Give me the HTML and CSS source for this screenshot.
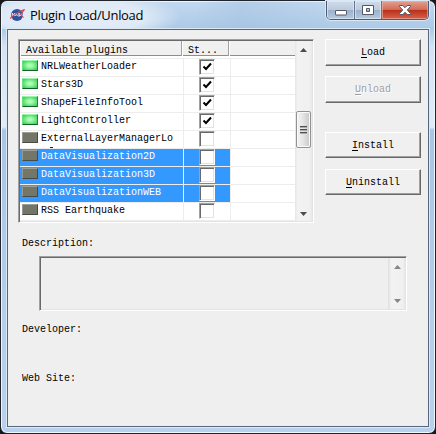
FILE: index.html
```
<!DOCTYPE html>
<html lang="en">
<head>
<meta charset="utf-8">
<title>Plugin Load/Unload</title>
<link rel="stylesheet" href="styles.css">
</head>
<body>
<div class="window">
  <header class="titlebar">
    <svg class="logo" width="16" height="14" viewBox="0 0 16 14">
      <circle cx="7" cy="7" r="6" fill="#2d559f"/>
      <path d="M2.300 8V5.200L4.500 8V5.200M5 8l1.200-2.600L7.400 8M8.200 8h1.500L8.500 5.700h1.700M10.500 8l1-2.500L12.400 8" fill="none" stroke="#e2eaf6" stroke-width="1"/>
      <path d="M0 10.500Q7 4 14.500 1.500Q12.500 3.500 10.800 6.500L13.500 9.500" fill="none" stroke="#d84352" stroke-width="1.100"/>
    </svg>
    <h1 class="title">Plugin Load/Unload</h1>
    <div class="controls">
      <span class="control min"><svg width="12" height="6" viewBox="0 0 12 6"><rect x=".5" y=".5" width="11" height="4.500" rx=".5" fill="#fff" stroke="#535766"/></svg></span>
      <span class="control max"><svg width="12" height="10" viewBox="0 0 12 10"><path d="M.5.5h11v9H.5zM4.500 3.500v3h3v-3z" fill="#fff" fill-rule="evenodd" stroke="#535766"/></svg></span>
      <span class="control close"><svg width="12" height="10" viewBox="0 0 12 10"><path d="M.5.5h3.300L6 2.700 8.200.5h3.300v1L8.300 5l3.200 3.500v1H8.200L6 7.300 3.800 9.500H.5v-1L3.700 5 .5 1.500z" fill="#fff" stroke="#535666"/></svg></span>
    </div>
  </header>
  <main class="client">
    <section class="top">
      <div class="list">
        <div class="table">
          <div class="head"><span>Available plugins</span><span>St...</span><span></span></div>
          <div class="row"><span class="name"><i class="led on"></i>NRLWeatherLoader</span><span class="state"><i class="check"><svg width="12" height="12"><path d="M2.500 5.500l2.500 2.500 5-5.500" /></svg></i></span><span></span></div>
          <div class="row"><span class="name"><i class="led on"></i>Stars3D</span><span class="state"><i class="check"><svg width="12" height="12"><path d="M2.500 5.500l2.500 2.500 5-5.500" /></svg></i></span><span></span></div>
          <div class="row"><span class="name"><i class="led on"></i>ShapeFileInfoTool</span><span class="state"><i class="check"><svg width="12" height="12"><path d="M2.500 5.500l2.500 2.500 5-5.500" /></svg></i></span><span></span></div>
          <div class="row"><span class="name"><i class="led on"></i>LightController</span><span class="state"><i class="check"><svg width="12" height="12"><path d="M2.500 5.500l2.500 2.500 5-5.500" /></svg></i></span><span></span></div>
          <div class="row wrapped"><span class="name"><i class="led"></i>ExternalLayerManagerLo</span><span class="state"><i class="check"></i></span><span></span></div>
          <div class="row selected"><span class="name"><i class="led"></i>DataVisualization2D</span><span class="state"><i class="check"></i></span><span></span></div>
          <div class="row selected"><span class="name"><i class="led"></i>DataVisualization3D</span><span class="state"><i class="check"></i></span><span></span></div>
          <div class="row selected"><span class="name"><i class="led"></i>DataVisualizationWEB</span><span class="state"><i class="check"></i></span><span></span></div>
          <div class="row"><span class="name"><i class="led"></i>RSS Earthquake</span><span class="state"><i class="check"></i></span><span></span></div>
          <div class="row"><span class="name"></span><span class="state"><i class="check"></i></span><span></span></div>
        </div>
        <div class="scroll">
          <svg width="7" height="4" viewBox="0 0 7 4"><path d="M3.500 0L7 4H0z"/></svg>
          <div class="thumb"><i></i><i></i><i></i></div>
          <svg width="7" height="4" viewBox="0 0 7 4"><path d="M0 0h7L3.500 4z"/></svg>
        </div>
      </div>
      <div class="buttons">
        <button><span><u>L</u>oad</span></button>
        <button disabled><span><u>U</u>nload</span></button>
        <button class="install"><span><u>I</u>nstall</span></button>
        <button class="uninstall"><span><u>U</u>ninstall</span></button>
      </div>
    </section>
    <section class="details">
      <p>Description:</p>
      <div class="textbox">
        <div class="scroll faint">
          <svg width="7" height="4" viewBox="0 0 7 4"><path d="M3.500 0L7 4H0z"/></svg>
          <svg width="7" height="4" viewBox="0 0 7 4"><path d="M0 0h7L3.500 4z"/></svg>
        </div>
      </div>
      <p class="developer">Developer:</p>
      <p class="website">Web Site:</p>
    </section>
  </main>
</div>
</body>
</html>
```
FILE: styles.css
```
* { box-sizing: border-box; }
body {
  margin: 0;
  background: #17171c;
  font: 10px/12px "Liberation Mono", monospace;
  color: #000;
  overflow: hidden;
}
.window {
  width: 436px;
  height: 434px;
  padding: 0 6px 6px;
  border: 1px solid #20242c;
  border-radius: 7px;
  box-shadow: inset 0 0 0 1px #eef6fe;
  background: linear-gradient(180deg, #c3d9ef 0, #abc9e6 28px, #d3e3f4 45px, #e0ebf7 126px, #a9c5e3 129px, #b4cde9 300px, #b9d1ec 100%);
}
.titlebar {
  display: flex;
  height: 28px;
  margin: 0 -5px;
  padding: 0 5px 0 8px;
  background: radial-gradient(ellipse 110px 27px at 70px 16px, #e5eef8 0, #dfeaf6 65%, transparent 100%), linear-gradient(100deg, transparent 45%, #9fbfdf66 55%, transparent 75%);
  border-radius: 6px 6px 0 0;
}
.logo { margin: 7px 4px 0 0; flex: none; }
.title {
  margin: 4px 0 0;
  font: 13px/20px "Open Sans", sans-serif;
  white-space: nowrap;
  letter-spacing: -0.33px;
}
.controls {
  display: flex;
  width: 103px;
  height: 19px;
  margin: 0 0 0 auto;
  border: 1px solid #4c5a70;
  border-top: 0;
  border-radius: 0 0 5px 5px;
  box-shadow: 0 0 0 1px #d9e8f7;
  overflow: hidden;
}
.control {
  display: flex;
  align-items: center;
  justify-content: center;
  width: 28px;
  box-shadow: inset 0 0 0 1px #e4edf6aa;
  background: linear-gradient(#d0dbe8 0, #bccbdd 48%, #9bb0ca 50%, #b5c9e0 100%);
}
.min { padding-top: 5px; border-right: 1px solid #65758b; }
.max { width: 27px; border-right: 1px solid #65758b; }
.close {
  flex: 1;
  box-shadow: inset 0 0 0 1px #eab9ad99;
  background: linear-gradient(#e3a091 0, #d36e59 47%, #b82f19 50%, #d8624a 100%);
}
.client {
  height: 398px;
  padding: 9px 6px 0 10px;
  border: 1px solid #56677b;
  box-shadow: 0 0 0 1px #dbe8f6;
  background: #efefef;
}
.top { display: flex; gap: 11px; }
.list, .textbox {
  border: 1px solid;
  border-color: #a0a0a0 #fff #fff #a0a0a0;
  box-shadow: inset 1px 1px #696969, inset -1px -1px #e3e3e3;
}
.list {
  display: flex;
  width: 296px;
  height: 184px;
  padding: 1px;
}
.table {
  width: 275px;
  height: 180px;
  overflow: hidden;
  background: #fff;
}
.head, .row {
  display: grid;
  grid-template-columns: 164px 47px 1fr;
  height: 18px;
  white-space: pre;
}
.head {
  grid-template-columns: 162px 47px 1fr;
  height: 15px;
  background: #f0f0f0;
  border-bottom: 1px solid #8d8d8d;
}
.head span { padding: 4px 0 0 5px; line-height: 11px; border-right: 1px solid #a0a0a0; border-left: 1px solid #fff; }
.head span:last-child { border-right: 0; }
.head + .row { height: 21px; padding-top: 2px; }
.head + .row > span { height: 19px; border-top: 1px solid #ededed; }
.row > span { border-right: 1px solid #ededed; border-bottom: 1px solid #ededed; }
.row > span:last-child { border-right: 0; }
.name { display: flex; padding-left: 2px; line-height: 15px; }
.led {
  width: 16px;
  height: 11px;
  margin: 1px 3px 0 0;
  border: 1px solid;
  border-color: #9b9e94 #484b43 #484b43 #96998f;
  background: #747768;
}
.on {
  border-color: #9af7aa #23823a #126125 #66e47e;
  background: radial-gradient(ellipse, #a8ffb1 20%, #64e17b 65%, #41be5c);
}
.state { padding-left: 15px; }
.check {
  display: block;
  width: 16px;
  height: 16px;
  padding: 1px;
  border: 1px solid;
  border-color: #a0a0a0 #fff #fff #a0a0a0;
  background: #fff;
  box-shadow: inset 1px 1px #696969, inset -1px -1px #e3e3e3;
}
.check svg { display: block; fill: none; stroke: #000; stroke-width: 2; }
.selected > span:not(:last-child) { background: #3399ff; color: #fff; }
.wrapped .name { position: relative; }
.wrapped .name::after {
  content: "";
  position: absolute;
  left: 30px;
  bottom: 0;
  width: 3px;
  height: 1px;
  background: #222;
}
.scroll {
  display: flex;
  flex-direction: column;
  align-items: center;
  width: 17px;
  padding: 7px 0 5px;
  background: linear-gradient(90deg, #e5e5e5, #f2f2f2 15%, #f0f0f0 85%, #e8e8e8);
}
.scroll svg { display: block; fill: #4b4b4b; }
.thumb {
  display: flex;
  flex-direction: column;
  align-items: center;
  justify-content: center;
  gap: 1px;
  width: 15px;
  height: 37px;
  margin: 59px 0 auto;
  border: 1px solid #929292;
  border-radius: 2px;
  box-shadow: inset 0 0 0 1px #fafafa;
  background: linear-gradient(90deg, #f4f4f4 0, #e5e5e5 45%, #c8c8c8 100%);
}
.thumb i { width: 7px; height: 2px; border-top: 1px solid #4f4f4f; background: #aaa; }
.buttons { width: 96px; }
button {
  display: block;
  width: 96px;
  height: 27px;
  margin: 0 0 10px;
  padding: 1px 0 0;
  border: 1px solid;
  border-color: #fff #696969 #696969 #fff;
  box-shadow: inset -1px -1px #a0a0a0;
  background: #f0f0f0;
  font: inherit;
  color: #000;
}
button:disabled { color: #a0a0a0; text-shadow: 1px 1px #fff; }
u { text-underline-offset: 2px; }
.install { height: 26px; margin-top: 29px; margin-bottom: 11px; }
.uninstall { height: 26px; }
.details { padding: 15px 0 0 4px; }
.details p { margin: 0; }
.textbox {
  display: flex;
  justify-content: flex-end;
  width: 368px;
  height: 55px;
  margin: 6px 0 0 17px;
  padding: 1px;
}
.faint { justify-content: space-between; padding: 7px 0 6px; border-left: 1px solid #e2e2e2; }
.faint svg { fill: #858585; }
.developer { padding-top: 13px; }
.website { padding-top: 37px; }
```
